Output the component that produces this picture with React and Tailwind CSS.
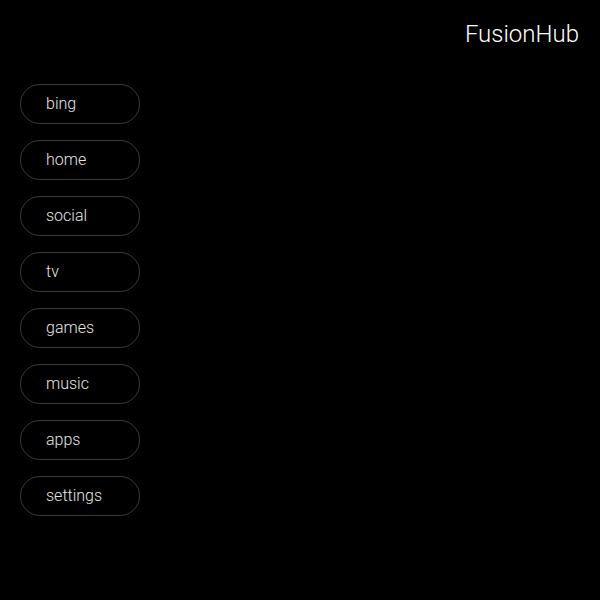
export default function App() {
  const items = ["bing", "home", "social", "tv", "games", "music", "apps", "settings"];
  return (
    <div className="w-[600px] h-[600px] bg-black flex flex-col" style={{ fontFamily: "Roboto, sans-serif" }}>
      <div className="flex justify-end pr-[21px] pt-[18px]">
        <span className="text-[24px] leading-[32px] font-light text-white">FusionHub</span>
      </div>
      <div className="flex flex-col gap-[16px] pl-[20px] pt-[34px]">
        {items.map((t) => (
          <button
            key={t}
            className="w-[120px] h-[40px] rounded-full border border-[#3a3a3a] text-left pl-[25px] text-[16px] font-light text-[#e6e6e6]"
          >
            {t}
          </button>
        ))}
      </div>
    </div>
  );
}
